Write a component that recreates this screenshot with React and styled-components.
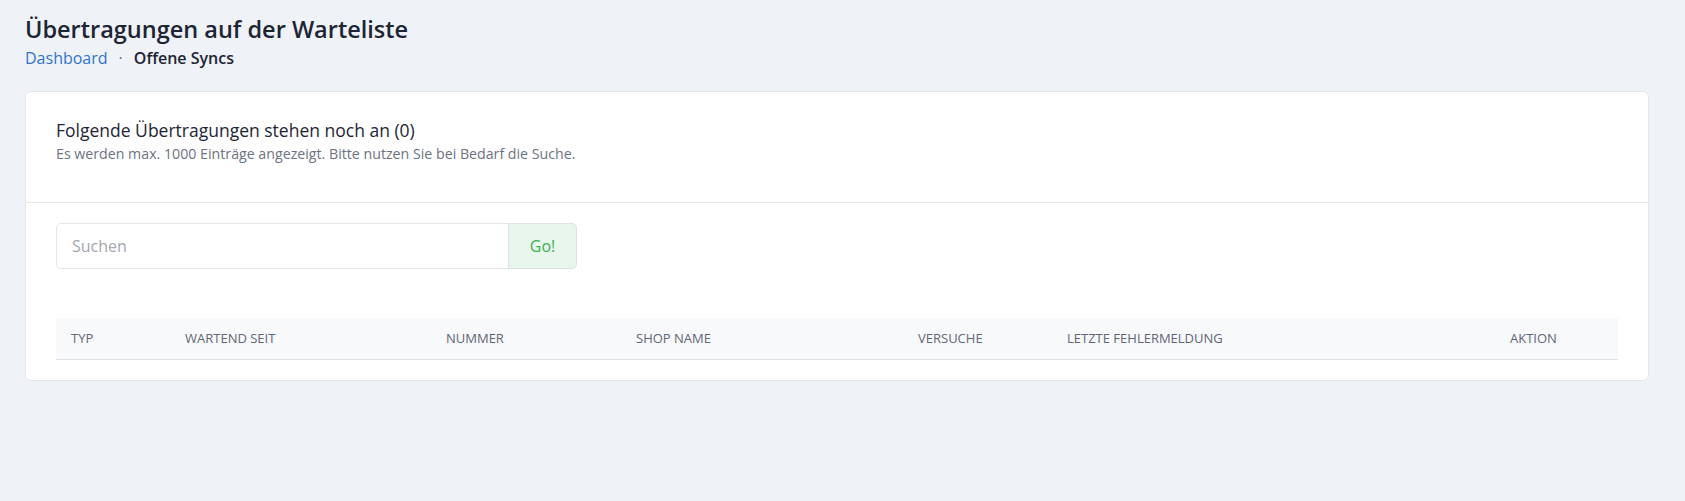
import React from 'react';
import styled, { createGlobalStyle } from 'styled-components';

const GlobalStyle = createGlobalStyle`
    body {
        margin: 0;
        background: #eff2f7;
        font-family: "Open Sans", "Noto Sans", sans-serif;
        color: #1e2433;
    }
`;

const Page = styled.div`
    padding: 12px 36px 40px 25px;
`;

const PageTitle = styled.h1`
    font-size: 23.5px;
    font-weight: 600;
    margin: 0;
    line-height: 34px;
    color: #1d2535;
`;

const Breadcrumb = styled.div`
    display: flex;
    align-items: center;
    gap: 11px;
    font-size: 16px;
    line-height: 25px;
    margin-bottom: 20px;
`;

const Crumb = styled.a`
    color: #2f74cf;
    text-decoration: none;
`;

const Separator = styled.span`
    color: #6b7280;
`;

const Current = styled.span`
    font-weight: 600;
    color: #1d2535;
`;

const Card = styled.div`
    background: #fff;
    border: 1px solid #e3e6ec;
    border-radius: 6px;
`;

const CardHeader = styled.div`
    padding: 25px 30px 38px;
    border-bottom: 1px solid #e5e8ee;
`;

const CardTitle = styled.h2`
    font-size: 17.5px;
    font-weight: 400;
    margin: 0;
    line-height: 26px;
    color: #1d2535;
`;

const CardHint = styled.p`
    margin: 0;
    font-size: 14.2px;
    line-height: 21px;
    color: #6c7280;
`;

const CardBody = styled.div`
    padding: 20px 30px 20px;
`;

const SearchGroup = styled.div`
    display: flex;
    width: 521px;
    height: 46px;
    margin-bottom: 49px;
`;

const SearchInput = styled.input`
    flex: 1;
    min-width: 0;
    border: 1px solid #e2e5ea;
    border-right: none;
    border-radius: 5px 0 0 5px;
    padding: 0 15px;
    font-family: inherit;
    font-size: 16px;
    color: #1d2535;
    outline: none;

    &::placeholder {
        color: #a3a7ae;
    }
`;

const GoButton = styled.button`
    width: 69px;
    border: 1px solid #dde2e6;
    border-radius: 0 5px 5px 0;
    background: #e9f6ed;
    color: #38b24f;
    font-family: inherit;
    font-size: 16px;
    cursor: pointer;
`;

const Table = styled.table`
    width: 100%;
    border-collapse: collapse;
    table-layout: fixed;
`;

const HeadCell = styled.th`
    box-sizing: border-box;
    width: ${(p) => p.$w}px;
    background: #f8f9fb;
    border-bottom: 1px solid #dfe2e8;
    padding: 0 15px;
    height: 41px;
    text-align: left;
    font-size: 13px;
    font-weight: 500;
    text-transform: uppercase;
    color: #5f6675;
    white-space: nowrap;
`;

const columns = [
    { label: 'Typ', w: 114 },
    { label: 'Wartend seit', w: 261 },
    { label: 'Nummer', w: 190 },
    { label: 'Shop Name', w: 282 },
    { label: 'Versuche', w: 149 },
    { label: 'Letzte Fehlermeldung', w: 443 },
    { label: 'Aktion', w: 123 },
];

const App = () => {
    return (
        <>
            <GlobalStyle />
            <Page>
                <PageTitle>Übertragungen auf der Warteliste</PageTitle>
                <Breadcrumb>
                    <Crumb href="#">Dashboard</Crumb>
                    <Separator>·</Separator>
                    <Current>Offene Syncs</Current>
                </Breadcrumb>
                <Card>
                    <CardHeader>
                        <CardTitle>Folgende Übertragungen stehen noch an (0)</CardTitle>
                        <CardHint>
                            Es werden max. 1000 Einträge angezeigt. Bitte nutzen Sie bei Bedarf die Suche.
                        </CardHint>
                    </CardHeader>
                    <CardBody>
                        <SearchGroup>
                            <SearchInput placeholder="Suchen" />
                            <GoButton>Go!</GoButton>
                        </SearchGroup>
                        <Table>
                            <thead>
                                <tr>
                                    {columns.map((c) => (
                                        <HeadCell key={c.label} $w={c.w}>
                                            {c.label}
                                        </HeadCell>
                                    ))}
                                </tr>
                            </thead>
                            <tbody />
                        </Table>
                    </CardBody>
                </Card>
            </Page>
        </>
    );
};

export default App;
